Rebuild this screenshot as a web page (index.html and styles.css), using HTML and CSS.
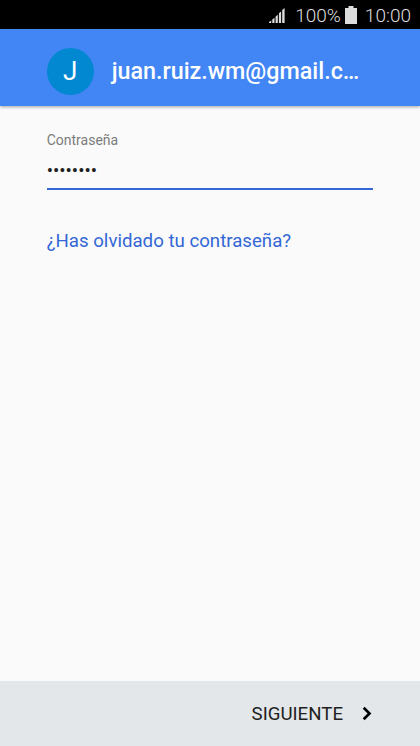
FILE: index.html
```html
<!DOCTYPE html>
<html lang="es">
<head>
  <meta charset="UTF-8" />
  <meta name="viewport" content="width=device-width, initial-scale=1.0"/>
  <title>Iniciar sesión</title>
  <link rel="stylesheet" href="styles.css">
</head>
<body>
  <div class="status-bar">
    <svg class="signal" width="16" height="16" viewBox="0 0 16 16">
      <path d="M0 16v-1l2.200-1.500V16zM3.300 16v-3.500l2.200-1.700V16zM6.600 16V9.500l2.200-1.700V16zM9.900 16V6.200l2.200-1.700V16zM13.200 16V3L15.600 1v15z" fill="#ddd"/>
    </svg>
    <span class="percent">100%</span>
    <svg class="battery" width="12" height="18" viewBox="0 0 12 18">
      <path d="M3.500 0h5v2H12v16H0V2h3.500z" fill="#ddd"/>
    </svg>
    <span class="clock">10:00</span>
  </div>

  <header class="account">
    <div class="avatar">J</div>
    <h1>juan.ruiz.wm@gmail.c…</h1>
  </header>

  <main>
    <label for="password">Contraseña</label>
    <input type="text" id="password" value="••••••••" />
    <a class="forgot" href="#">¿Has olvidado tu contraseña?</a>
  </main>

  <footer>
    <button type="button" class="next">
      <span>SIGUIENTE</span>
      <svg width="10" height="15" viewBox="0 0 10 15">
        <path d="M1.700 1.700L7.500 7.500L1.700 13.300" fill="none" stroke="#000" stroke-width="2.700"/>
      </svg>
    </button>
  </footer>
</body>
</html>
```
FILE: styles.css
```css
* {
  box-sizing: border-box;
}
body {
  margin: 0;
  height: 100vh;
  display: flex;
  flex-direction: column;
  background: #fafafa;
  font-family: Roboto, sans-serif;
  overflow: hidden;
}
.status-bar {
  height: 29px;
  padding: 1px 9px 0 0;
  display: flex;
  align-items: center;
  justify-content: flex-end;
  background: #000;
  color: #ddd;
  font-size: 19px;
  font-weight: 300;
}
.signal {
  margin-top: -1px;
}
.percent {
  margin-left: 10px;
}
.battery {
  margin: -1px 8px 0 4px;
}
.account {
  height: 77px;
  padding: 7px 46.67px 0;
  display: flex;
  align-items: center;
  background: #4285f4;
  color: #fff;
  box-shadow: 0 1px 3px rgba(0,0,0,0.35);
}
.avatar {
  width: 47px;
  height: 47px;
  margin-right: 18px;
  border-radius: 50%;
  background: #0288d1;
  font-size: 26px;
  line-height: 47px;
  text-align: center;
}
h1 {
  margin: 0;
  font-size: 23.3px;
  font-weight: 500;
  white-space: nowrap;
}
main {
  flex: 1;
  padding: 26px 46.67px 0;
}
label {
  display: block;
  color: #7c7c7c;
  font-size: 14px;
  line-height: 16px;
}
input {
  display: block;
  width: 100%;
  height: 42px;
  padding: 6px 0 0;
  border: none;
  border-bottom: 2px solid #3367d6;
  outline: none;
  background: none;
  color: #212121;
  font-family: inherit;
  font-size: 18.67px;
}
.forgot {
  display: block;
  margin-top: 40px;
  color: #3367d6;
  font-size: 18.67px;
  line-height: 22px;
  text-decoration: none;
}
footer {
  height: 65px;
  padding-right: 48px;
  display: flex;
  align-items: center;
  justify-content: flex-end;
  background: #e3e7ea;
}
.next {
  display: flex;
  align-items: center;
  gap: 19px;
  padding: 0;
  border: none;
  background: none;
  color: #212121;
  font-family: inherit;
  font-size: 18.67px;
}
```
